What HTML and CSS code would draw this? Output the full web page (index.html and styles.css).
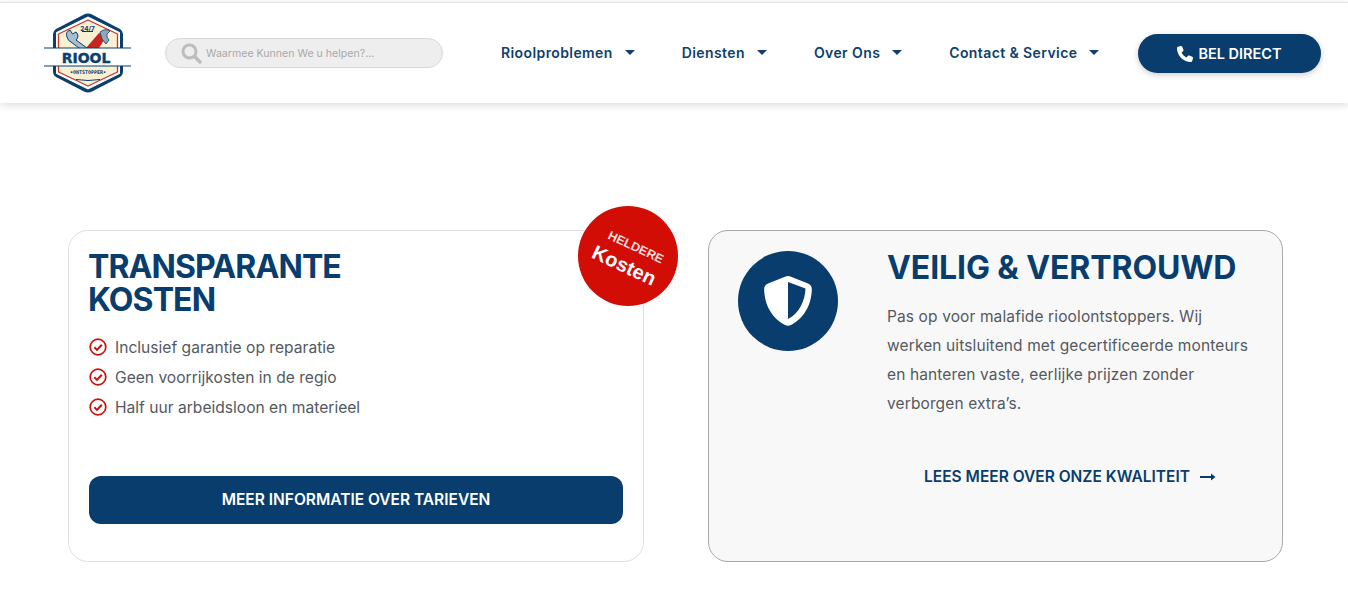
FILE: index.html
```html
<!DOCTYPE html>
<html lang="nl">
<head>
<meta charset="utf-8">
<title>Riool Ontstopper</title>
<link rel="stylesheet" href="styles.css">
</head>
<body>
<header class="header">
  <a class="logo" href="#">
    <svg width="90" height="82" viewBox="0 0 90 82">
      <path d="M41 2.500 Q45 0.500 49 2.500 L77 17 Q80 19 80 22 L80 60 Q80 63 77 65 L49 79.500 Q45 81.500 41 79.500 L13 65 Q10 63 10 60 L10 22 Q10 19 13 17 Z" fill="#0b3f6e"/>
      <path d="M45 5 L76.500 20.500 L76.500 61.500 L45 77 L13.500 61.500 L13.500 20.500 Z" fill="#fff" stroke="#fff" stroke-linejoin="round"/>
      <path d="M45 8 L74.500 22 L74.500 60 L45 74 L15.500 60 L15.500 22 Z" fill="#f8f0d2" stroke="#c8352e" stroke-width="1.300" stroke-linejoin="round"/>
      <path d="M24 25 Q22 20 27 18 L29.500 22 L33 20 Q37 24 33 28 L44 36 L40 39 L28 30 Q25 29 24 25 Z" fill="#a9bdd0" stroke="#0b3f6e" stroke-width="1"/>
      <path d="M43 36 L56 21 L63 25 L56 36 Z" fill="#c8251f"/>
      <path d="M57 20 Q62 16 67 19 L64 22 Q63 25 66 28 L63 32 Q58 28 57 20 Z" fill="#8fa6bc" stroke="#0b3f6e" stroke-width="0.800"/>
      <path d="M39 19.500 H50" stroke="#0b3f6e" stroke-width="1"/>
      <text x="44.500" y="18.500" class="logo-small">24/7</text>
      <rect x="1" y="36" width="87" height="18" fill="#fff"/>
      <path d="M1 36 H88 M1 54 H88" stroke="#0b3f6e" stroke-width="1.200"/>
      <text x="43" y="51" class="logo-name">RIOOL</text>
      <text x="45" y="61.500" class="logo-sub">•ONTSTOPPER•</text>
      <path d="M33 67.500 Q45 69.500 57 67.500" stroke="#0b3f6e" stroke-width="1" fill="none"/>
    </svg>
  </a>
  <div class="search">
    <svg class="search-icon" width="21" height="21" viewBox="0 0 21 21">
      <circle cx="8.500" cy="8.500" r="6.500" fill="none" stroke="#bdbdbd" stroke-width="3"/>
      <path d="M13.500 13.500 L19 19" stroke="#bdbdbd" stroke-width="3.500" stroke-linecap="round"/>
    </svg>
    <span>Waarmee Kunnen We u helpen?...</span>
  </div>
  <nav class="nav">
    <a class="nav-item" href="#">Rioolproblemen<i class="caret"></i></a>
    <a class="nav-item" href="#">Diensten<i class="caret"></i></a>
    <a class="nav-item" href="#">Over Ons<i class="caret"></i></a>
    <a class="nav-item" href="#">Contact &amp; Service<i class="caret"></i></a>
  </nav>
  <a class="call" href="#">
    <svg width="16" height="16" viewBox="0 0 512 512"><path fill="#fff" d="M164.900 24.600c-7.700-18.600-28-28.500-47.400-23.200l-88 24C12.100 30.200 0 46 0 64C0 311.400 200.600 512 448 512c18 0 33.800-12.100 38.600-29.500l24-88c5.300-19.400-4.600-39.700-23.200-47.400l-96-40c-16.300-6.800-35.200-2.100-46.300 11.600L304.700 368C234.300 334.700 177.300 277.700 144 207.300L193.300 167c13.700-11.200 18.400-30 11.600-46.300l-40-96z"/></svg>
    BEL DIRECT
  </a>
</header>

<main class="cards">
  <section class="card card-light">
    <div class="badge">
      <div class="badge-text">
        <span class="badge-top">HELDERE</span>
        <span class="badge-main">Kosten</span>
      </div>
    </div>
    <h2 class="title title-narrow">TRANSPARANTE KOSTEN</h2>
    <ul class="checks">
      <li><svg width="18" height="18" viewBox="0 0 18 18"><circle cx="9" cy="9" r="7.800" fill="none" stroke="#c9100c" stroke-width="1.700"/><path d="M5.300 9.300 L8 11.900 L12.800 6.700" fill="none" stroke="#c9100c" stroke-width="2"/></svg>Inclusief garantie op reparatie</li>
      <li><svg width="18" height="18" viewBox="0 0 18 18"><circle cx="9" cy="9" r="7.800" fill="none" stroke="#c9100c" stroke-width="1.700"/><path d="M5.300 9.300 L8 11.900 L12.800 6.700" fill="none" stroke="#c9100c" stroke-width="2"/></svg>Geen voorrijkosten in de regio</li>
      <li><svg width="18" height="18" viewBox="0 0 18 18"><circle cx="9" cy="9" r="7.800" fill="none" stroke="#c9100c" stroke-width="1.700"/><path d="M5.300 9.300 L8 11.900 L12.800 6.700" fill="none" stroke="#c9100c" stroke-width="2"/></svg>Half uur arbeidsloon en materieel</li>
    </ul>
    <a class="cta" href="#">MEER INFORMATIE OVER TARIEVEN</a>
  </section>

  <section class="card card-grey">
    <div class="shield">
      <svg width="48" height="50" viewBox="0 0 48 50">
        <path fill="#fff" fill-rule="evenodd" d="M24 0 C25 0 26 0.300 27 0.800 L44 7.500 C46.500 8.500 47.800 10.500 47.800 13 C47.800 23 44 40 27 49 C25 50 23 50 21 49 C4 40 0.200 23 0.200 13 C0.200 10.500 1.500 8.500 4 7.500 L21 0.800 C22 0.300 23 0 24 0 Z M24 6 V43 C36 37 41 24 41.500 12.500 Z"/>
      </svg>
    </div>
    <div class="card-body">
      <h2 class="title title-wide">VEILIG &amp; VERTROUWD</h2>
      <p class="copy">Pas op voor malafide rioolontstoppers. Wij werken uitsluitend met gecertificeerde monteurs en hanteren vaste, eerlijke prijzen zonder verborgen extra’s.</p>
      <a class="more" href="#">LEES MEER OVER ONZE KWALITEIT
        <svg width="16" height="10" viewBox="0 0 16 10"><path d="M0 5 H13" stroke="#0a3d6b" stroke-width="2"/><path d="M11 1.500 L15.500 5 L11 8.500 Z" fill="#0a3d6b"/></svg>
      </a>
    </div>
  </section>
</main>
</body>
</html>
```

FILE: styles.css
```css
* { box-sizing: border-box; }

html, body { margin: 0; padding: 0; }

body {
  background: #fff;
  font-family: "Inter", "Liberation Sans", sans-serif;
  color: #54595f;
  height: 595px;
  overflow: hidden;
  padding-top: 2px;
}

a { text-decoration: none; }

.header {
  height: 101px;
  background: #fff;
  display: flex;
  align-items: center;
  padding: 0 27px 0 43px;
  border-top: 1px solid #e4e4e4;
  box-shadow: 0 2px 8px rgba(0, 0, 0, 0.14);
}

.logo { display: block; width: 90px; height: 82px; margin-top: -1px; }

.logo-small { font: 700 6.500px "Inter", sans-serif; fill: #0b3f6e; text-anchor: middle; }
.logo-name { font: 700 14px "DejaVu Sans", sans-serif; fill: #0b3f6e; stroke: #0b3f6e; stroke-width: 0.400px; text-anchor: middle; }
.logo-sub { font: 700 5px "DejaVu Sans Mono", monospace; fill: #0b3f6e; text-anchor: middle; }

.search {
  width: 278px;
  height: 30px;
  margin-left: 32px;
  display: flex;
  align-items: center;
  gap: 4px;
  padding-left: 15px;
  background: #eeeeee;
  border: 1px solid #d8d8d8;
  border-radius: 15px;
  font-size: 10.600px;
  color: #a9a9a9;
}

.nav {
  display: flex;
  align-items: center;
  gap: 47px;
  margin: -1px 0 0 58px;
}

.nav-item {
  display: flex;
  align-items: center;
  color: #0f3f6c;
  font-size: 14px;
  font-weight: 600;
  letter-spacing: 0.400px;
}

.caret {
  width: 0;
  height: 0;
  margin-left: 12px;
  border-left: 5px solid transparent;
  border-right: 5px solid transparent;
  border-top: 5.500px solid #0f3f6c;
}

.call {
  margin-left: auto;
  margin-top: 1px;
  width: 183px;
  height: 39px;
  display: flex;
  align-items: center;
  justify-content: center;
  gap: 5px;
  background: #083d6d;
  color: #fff;
  border-radius: 20px;
  font-size: 14.500px;
  font-weight: 600;
  box-shadow: 0 2px 6px rgba(0, 0, 0, 0.2);
}

.cards {
  display: flex;
  gap: 64px;
  padding: 127px 0 0 68px;
}

.card {
  position: relative;
  height: 332px;
  border-radius: 20px;
}

.card-light {
  flex: 0 0 576px;
  background: #fff;
  border: 1px solid #e0e0e0;
  padding: 19px 20px 37px;
  display: flex;
  flex-direction: column;
}

.card-grey {
  flex: 0 0 575px;
  background: #f8f8f8;
  border: 1px solid #a8a8a8;
  padding: 20px 29px;
  display: flex;
  gap: 49px;
}

.badge {
  position: absolute;
  top: -25px;
  right: -35px;
  width: 100px;
  height: 100px;
  border-radius: 50%;
  background: #d10d06;
  display: flex;
  align-items: center;
  justify-content: center;
  color: #fff;
  font-family: "Liberation Sans", sans-serif;
  font-weight: 700;
}

.badge-text {
  display: flex;
  flex-direction: column;
  align-items: center;
  margin-top: 2px;
  transform: rotate(25deg);
  line-height: 1;
}

.badge-top { font-size: 12.500px; color: #f8dcdb; margin-left: 6px; }
.badge-main { font-size: 20px; margin-top: 4px; }

.title {
  margin: 0;
  color: #083d6d;
  font-size: 32px;
  line-height: 33px;
  font-weight: 700;
}

.title-narrow { width: 300px; letter-spacing: -0.900px; margin-left: -1px; }
.title-wide { letter-spacing: -0.100px; }

.checks {
  list-style: none;
  margin: 16px 0 0;
  padding: 0;
  font-size: 15.600px;
}

.checks li {
  display: flex;
  align-items: center;
  gap: 8px;
  height: 30px;
}

.cta {
  margin-top: auto;
  height: 48px;
  padding-bottom: 2px;
  display: flex;
  align-items: center;
  justify-content: center;
  background: #083d6d;
  color: #fff;
  border-radius: 12px;
  font-size: 15.500px;
  font-weight: 600;
}

.shield {
  flex: none;
  width: 100px;
  height: 100px;
  border-radius: 50%;
  background: #083d6d;
  display: flex;
  align-items: center;
  justify-content: center;
}

.card-body { flex: 1; min-width: 0; }

.copy {
  margin: 18px 0 0;
  font-size: 15.500px;
  line-height: 29px;
  letter-spacing: 0.120px;
}

.more {
  display: flex;
  align-items: center;
  justify-content: center;
  gap: 10px;
  margin-top: 49px;
  color: #083d6d;
  font-size: 15.500px;
  font-weight: 600;
}
```
